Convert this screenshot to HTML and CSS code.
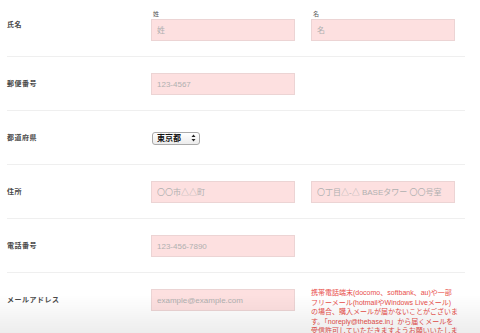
FILE: index.html
```html
<!DOCTYPE html>
<html lang="ja">
<head>
    <meta charset="UTF-8">
    <meta name="viewport" content="width=device-width, initial-scale=1.0">
    <title>お客様情報</title>
    <link rel="stylesheet" href="styles.css">
</head>
<body>

    <form class="form">
        <!-- 氏名 -->
        <div class="row row-name">
            <div class="label">氏名</div>
            <div class="fields">
                <div class="field">
                    <span class="field-cap">姓</span>
                    <input class="input" type="text" placeholder="姓">
                </div>
                <div class="field">
                    <span class="field-cap">名</span>
                    <input class="input" type="text" placeholder="名">
                </div>
            </div>
        </div>

        <div class="row">
            <div class="label">郵便番号</div>
            <div class="fields">
                <input class="input" type="text" placeholder="123-4567">
            </div>
        </div>

        <div class="row">
            <div class="label">都道府県</div>
            <div class="fields">
                <div class="select-wrap">
                    <select class="select">
                        <option>東京都</option>
                    </select>
                    <svg class="select-arrow" width="5" height="8" viewBox="0 0 5 8">
                        <path d="M2.5 0.5 L4.5 3 L0.5 3 Z M2.5 7.5 L4.5 5 L0.5 5 Z" fill="#222"/>
                    </svg>
                </div>
            </div>
        </div>

        <div class="row">
            <div class="label">住所</div>
            <div class="fields">
                <input class="input" type="text" placeholder="〇〇市△△町">
                <input class="input" type="text" placeholder="〇丁目△-△ BASEタワー 〇〇号室">
            </div>
        </div>

        <div class="row">
            <div class="label">電話番号</div>
            <div class="fields">
                <input class="input" type="text" placeholder="123-456-7890">
            </div>
        </div>

        <div class="row row-top">
            <div class="label">メールアドレス</div>
            <div class="fields">
                <input class="input" type="text" placeholder="example@example.com">
                <p class="note">携帯電話端末(docomo、softbank、au)や一部<br>フリーメール(hotmailやWindows Liveメール)<br>の場合、購入メールが届かないことがございま<br>す。「noreply@thebase.in」から届くメールを<br>受信許可していただきますようお願いいたしま<br>す。</p>
            </div>
        </div>
    </form>

    <div class="fade"></div>

</body>
</html>
```

FILE: styles.css
```css
/* 基本 */
body {
    margin: 0;
    padding: 0;
    background-color: #fff;
    font-family: "Liberation Sans", "Noto Sans CJK JP", sans-serif;
    color: #4a4a4a;
    overflow: hidden;
}

.form {
    width: 458px;
    margin-left: 7px;
}

/* 行 */
.row {
    display: flex;
    align-items: center;
    padding: 16px 0 15px;
    border-bottom: 1px solid #efefef;
}

.row-name {
    padding-top: 5px;
}

.row-name .label {
    padding-top: 4px;
}

.row-top {
    align-items: flex-start;
}

.label {
    width: 144px;
    font-size: 7px;
    font-weight: bold;
    letter-spacing: 0.5px;
    line-height: 22px;
}

.fields {
    display: flex;
    gap: 16px;
    min-height: 22px;
    align-items: center;
}

.row-top .fields {
    align-items: flex-start;
}

.field {
    display: flex;
    flex-direction: column;
}

.field-cap {
    display: block;
    box-sizing: border-box;
    height: 14px;
    padding: 6px 0 0 2px;
    font-size: 6px;
    line-height: 6px;
    color: #555;
}

/* 入力欄 */
.input {
    box-sizing: border-box;
    width: 144px;
    height: 22px;
    margin: 0;
    padding: 0 5px;
    border: 1px solid #ecd4d4;
    background-color: #fde0e0;
    font-family: "Liberation Sans", "Noto Sans CJK JP", sans-serif;
    font-size: 8px;
    color: #333;
    outline: none;
}

.input::placeholder {
    color: #b0b0b0;
}

/* セレクト */
.select-wrap {
    position: relative;
    margin-left: 1px;
}

.select {
    -webkit-appearance: none;
    appearance: none;
    box-sizing: border-box;
    width: 48px;
    height: 13px;
    margin: 0;
    padding: 0 0 0 4px;
    border: 1px solid #a9a9a9;
    border-radius: 3px;
    background: linear-gradient(#fff, #ececec);
    font-family: "Liberation Sans", "Noto Sans CJK JP", sans-serif;
    font-size: 8px;
    font-weight: bold;
    line-height: 11px;
    color: #111;
    display: block;
}

.select-arrow {
    position: absolute;
    right: 4px;
    top: 2.5px;
    pointer-events: none;
}

/* 注意書き */
.note {
    margin: -1px 0 0;
    font-size: 7px;
    line-height: 9.5px;
    color: #e84e4a;
    white-space: nowrap;
}

/* 下部のフェード */
.fade {
    position: fixed;
    left: 0;
    right: 0;
    bottom: 0;
    height: 38px;
    background: linear-gradient(rgba(0, 0, 0, 0), rgba(0, 0, 0, 0.07));
    pointer-events: none;
}
```
